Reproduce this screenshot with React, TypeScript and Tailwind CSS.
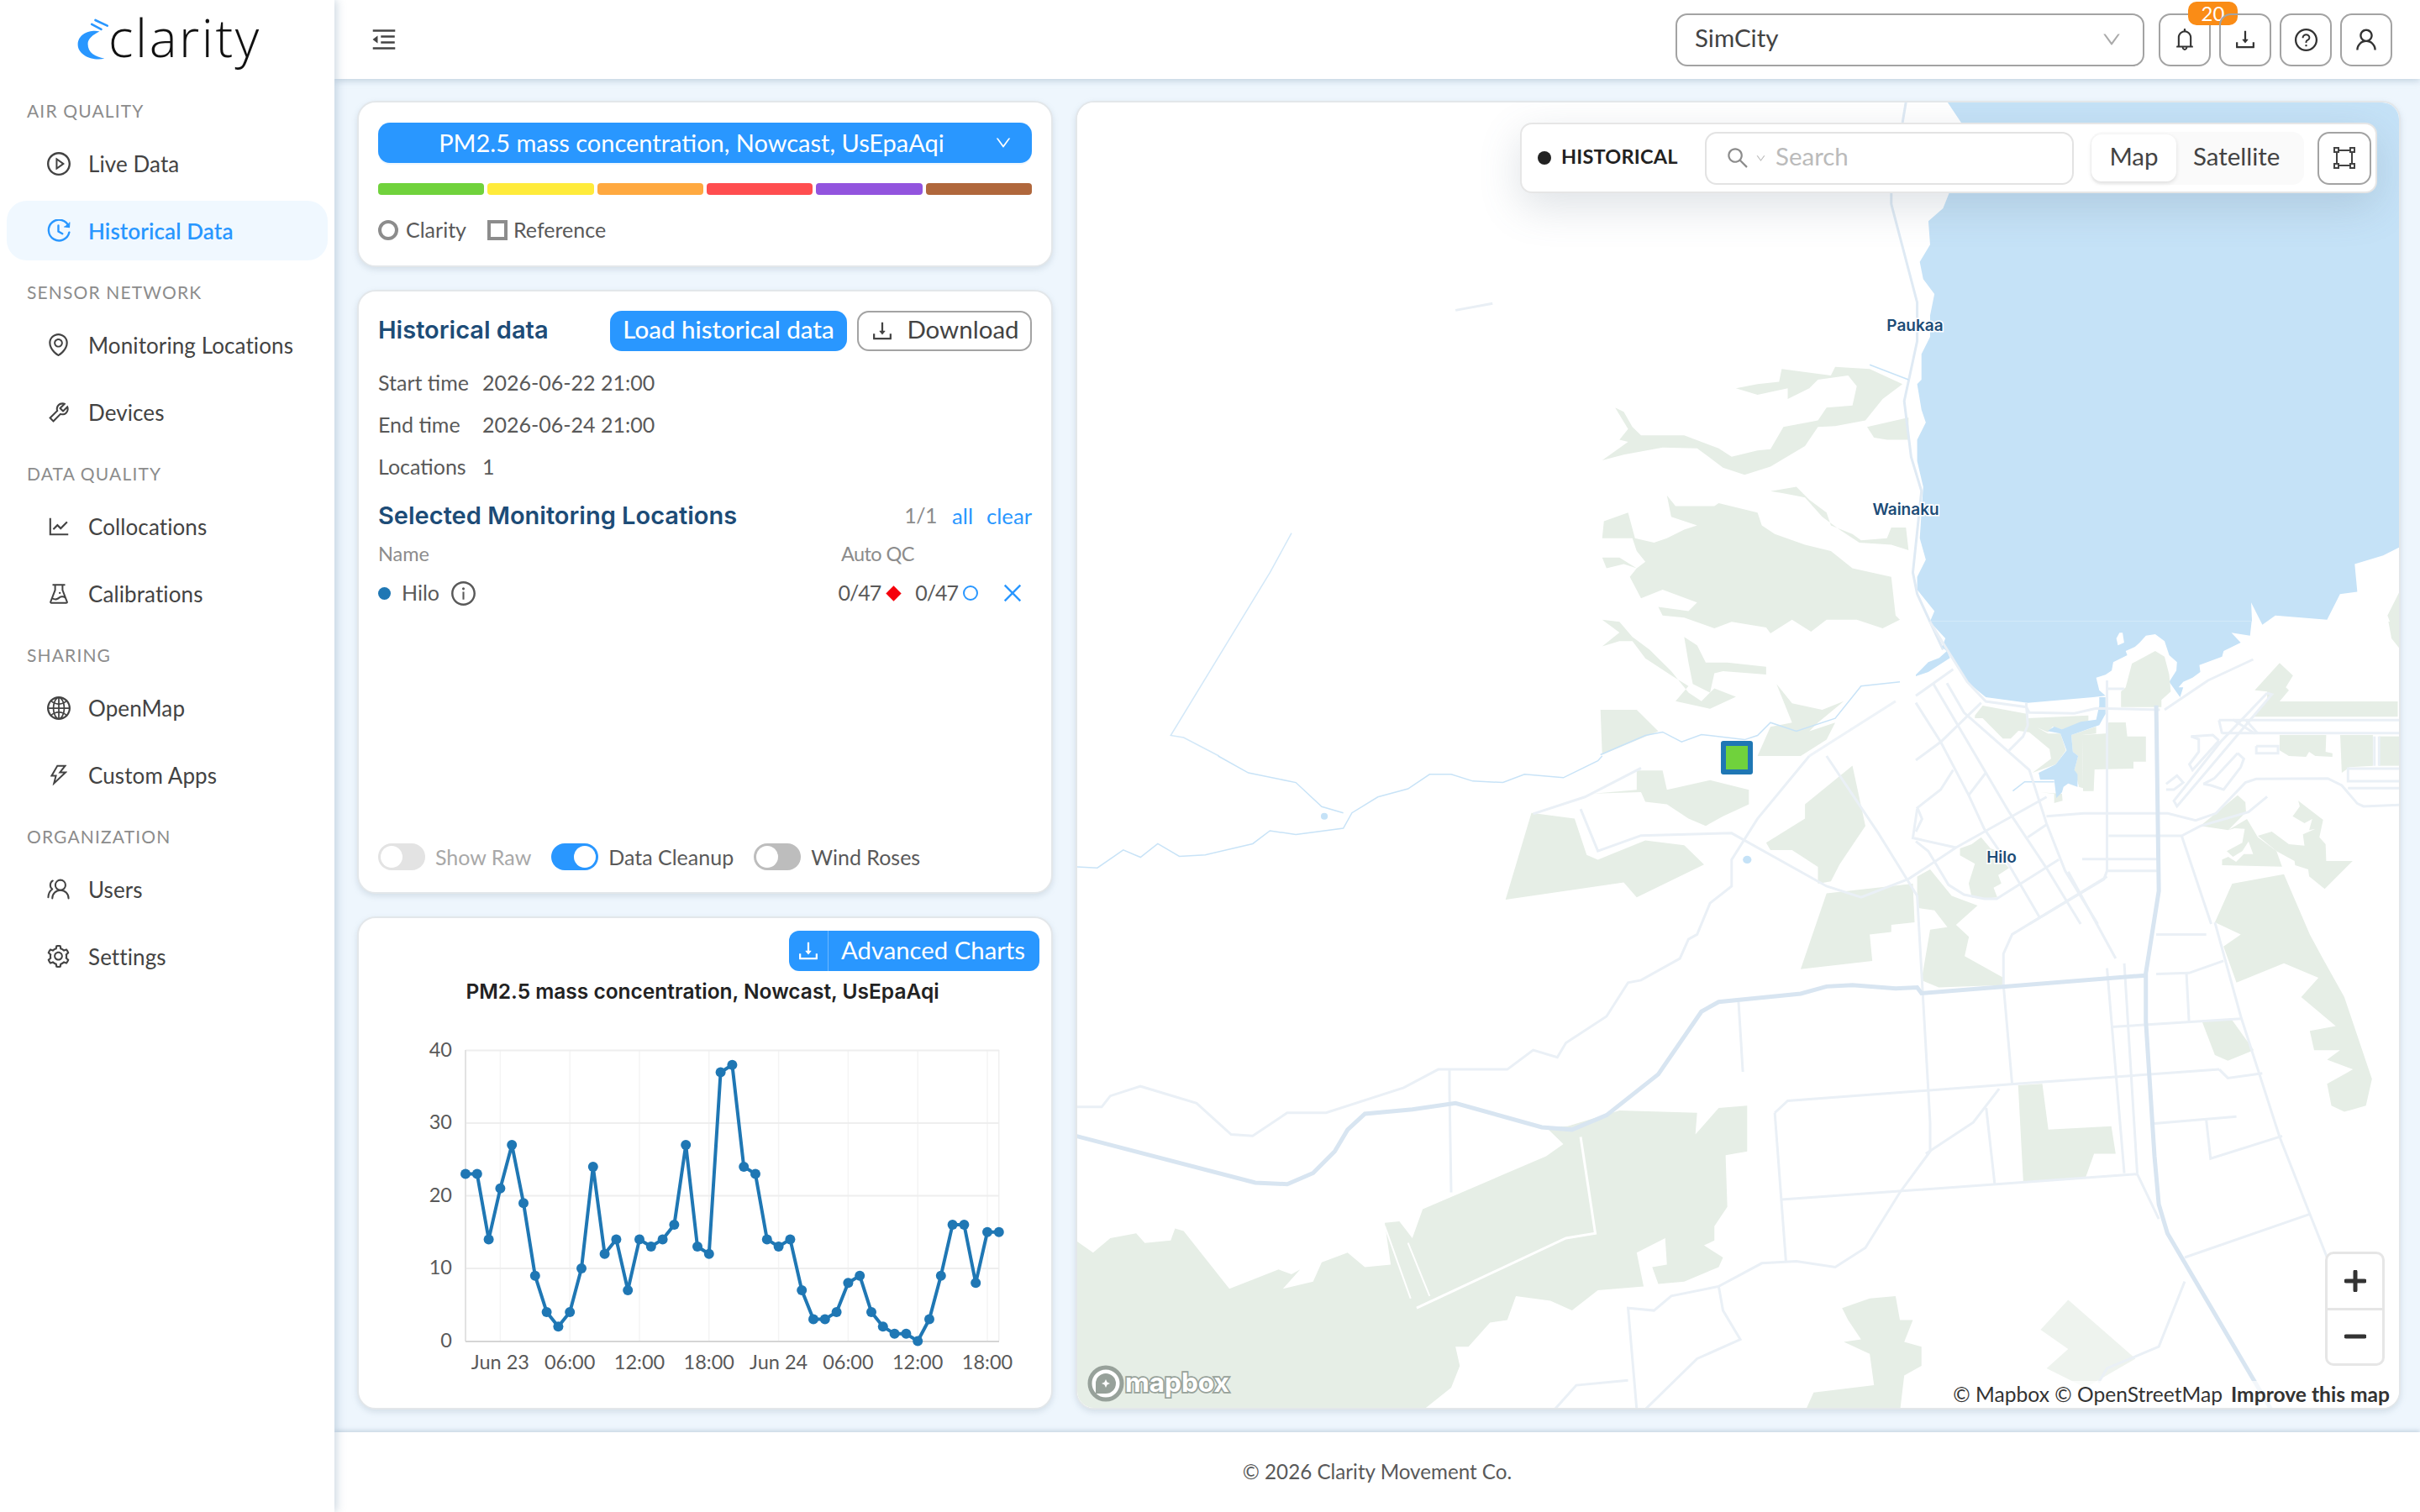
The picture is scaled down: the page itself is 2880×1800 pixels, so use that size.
import {
  AiOutlineBell,
  AiOutlineClose,
  AiOutlineDown,
  AiOutlineDownload,
  AiOutlineEnvironment,
  AiOutlineExperiment,
  AiOutlineGlobal,
  AiOutlineInfoCircle,
  AiOutlineLineChart,
  AiOutlineMenuFold,
  AiOutlinePlayCircle,
  AiOutlineQuestionCircle,
  AiOutlineSearch,
  AiOutlineSetting,
  AiOutlineThunderbolt,
  AiOutlineTool,
  AiOutlineUser,
} from 'react-icons/ai';
import { UsersRound } from 'lucide-react';

function HistoryIcon() {
  return (
    <svg viewBox="0 0 26 26" className="w-[28px] h-[28px]" fill="none" stroke="currentColor" strokeWidth="2.2" strokeLinecap="round">
      <path d="M24 8 A11.5 11.5 0 1 0 24.5 14.5" />
      <path d="M25 3.5 L24.6 9 L19 8.4" fill="currentColor" strokeWidth="1" />
      <path d="M12.5 7 V13.5 L17 16" />
    </svg>
  );
}

function Logo() {
  return (
    <div className="h-[119px] pl-[90px] pt-[20px] flex items-start">
      <svg viewBox="15 15 125 160" className="w-[42px] h-[53px]">
        <path d="M100 68 C70 60 22 75 22 115 C22 150 70 175 118 165 C85 158 58 145 58 112 C58 95 75 80 100 68 Z" fill="#2997ff" />
        <path d="M85 27 L128 47 M72 42 L106 60" stroke="#2997ff" strokeWidth="8" strokeLinecap="round" />
      </svg>
      <span className="-ml-[3px] -mt-[18px] text-[62px] leading-[85px] font-light tracking-[2.6px] text-[#111] font-[family-name:'Open_Sans',sans-serif]">clarity</span>
    </div>
  );
}

const navSections = [
  { title: 'AIR QUALITY', items: [
    { label: 'Live Data', icon: <AiOutlinePlayCircle size={32} /> },
    { label: 'Historical Data', icon: <HistoryIcon />, active: true },
  ] },
  { title: 'SENSOR NETWORK', items: [
    { label: 'Monitoring Locations', icon: <AiOutlineEnvironment size={31} /> },
    { label: 'Devices', icon: <AiOutlineTool size={30} /> },
  ] },
  { title: 'DATA QUALITY', items: [
    { label: 'Collocations', icon: <AiOutlineLineChart size={30} /> },
    { label: 'Calibrations', icon: <AiOutlineExperiment size={30} /> },
  ] },
  { title: 'SHARING', items: [
    { label: 'OpenMap', icon: <AiOutlineGlobal size={32} /> },
    { label: 'Custom Apps', icon: <AiOutlineThunderbolt size={30} /> },
  ] },
  { title: 'ORGANIZATION', items: [
    { label: 'Users', icon: <UsersRound size={29} strokeWidth={1.7} className="-scale-x-100" /> },
    { label: 'Settings', icon: <AiOutlineSetting size={31} /> },
  ] },
];

function Sidebar() {
  return (
    <aside className="w-[398px] shrink-0 bg-white z-20 shadow-[3px_0_10px_rgba(120,150,175,0.35)]">
      <Logo />
      {navSections.map((section) => (
        <div key={section.title} className="mb-[25px]">
          <div className="h-[26px] mb-[14px] pl-[32px] text-[21px] leading-[26px] tracking-[1.15px] text-[#8c8c8c]">{section.title}</div>
          <div className="flex flex-col gap-[9px]">
            {section.items.map((item) => (
              <div
                key={item.label}
                className={`ml-[8px] w-[382px] h-[71px] rounded-[24px] flex items-center ${item.active ? 'bg-[#f0f8ff] text-[#2997ff] font-semibold' : 'text-[#434343]'}`}
              >
                <span className="w-[97px] flex justify-center pl-[31px] pr-[5px] shrink-0">{item.icon}</span>
                <span className="text-[26px] tracking-[0.1px] pt-[1px]">{item.label}</span>
              </div>
            ))}
          </div>
        </div>
      ))}
    </aside>
  );
}

function IconButton({ children, badge }: { children: React.ReactNode; badge?: string }) {
  return (
    <div className="relative w-[62px] h-[63px] rounded-[14px] border-2 border-[#a3a3a3] flex items-center justify-center text-[#333]">
      {children}
      {badge && (
        <span className="absolute -top-[16px] left-[33px] w-[59px] h-[28px] rounded-[10px] bg-[#fa8c16] text-white text-[24px] leading-[27px] text-center">{badge}</span>
      )}
    </div>
  );
}

function Header() {
  return (
    <header className="h-[94px] shrink-0 bg-white flex items-center pl-[42px] pr-[33px] z-10 shadow-[0_2px_8px_rgba(120,150,175,0.4)]">
      <AiOutlineMenuFold size={34} className="text-[#444]" />
      <div className="ml-auto w-[558px] h-[63px] rounded-[14px] border-2 border-[#a3a3a3] flex items-center pl-[21px] pr-[24px] text-[29.5px] text-[#434343]">
        <span className="pb-[3px]">SimCity</span>
        <AiOutlineDown size={26} className="ml-auto text-[#aaa]" />
      </div>
      <div className="ml-[17px] flex gap-[10px]">
        <IconButton badge="20"><AiOutlineBell size={30} /></IconButton>
        <IconButton><AiOutlineDownload size={30} /></IconButton>
        <IconButton><AiOutlineQuestionCircle size={31} /></IconButton>
        <IconButton><AiOutlineUser size={32} /></IconButton>
      </div>
    </header>
  );
}

const card = 'bg-white rounded-[22px] border-2 border-[#e3e7ea] shadow-[0_3px_7px_rgba(120,140,160,0.22)]';
const aqiBars = ['bg-[#70d23c]', 'bg-[#ffeb3b]', 'bg-[#ffa940]', 'bg-[#ff4d4f]', 'bg-[#9254de]', 'bg-[#b0673c]'];
const heading = "text-[29px] font-semibold text-[#1d4c77] font-[family-name:Inter,sans-serif]";

function MetricCard() {
  return (
    <section className={`${card} h-[198px] shrink-0 px-[23px] pt-[24px]`}>
      <div className="h-[48px] rounded-[14px] bg-[#2997ff] text-white text-[29px] flex items-center justify-center relative shadow-[0_2px_0_rgba(41,151,255,0.08)]">
        <span className="-ml-[32px] pb-[1px]">PM2.5 mass concentration, Nowcast, UsEpaAqi</span>
        <AiOutlineDown size={22} className="absolute right-[23px]" />
      </div>
      <div className="mt-[24px] flex gap-[4px]">
        {aqiBars.map((c) => (
          <div key={c} className={`${c} h-[14px] flex-1 rounded-[4px]`} />
        ))}
      </div>
      <div className="mt-[27px] h-[30px] flex items-center text-[25px] text-[#595959]">
        <span className="w-[24px] h-[24px] rounded-full border-[4px] border-[#8c8c8c]" />
        <span className="ml-[9px]">Clarity</span>
        <span className="ml-[25px] w-[24px] h-[24px] border-[4px] border-[#8c8c8c]" />
        <span className="ml-[7px]">Reference</span>
      </div>
    </section>
  );
}

function Toggle({ on, dim, label }: { on?: boolean; dim?: boolean; label: string }) {
  return (
    <div className="flex items-center gap-[12px]">
      <span className={`relative w-[56px] h-[32px] rounded-full ${on ? 'bg-[#2997ff]' : dim ? 'bg-[#e3e3e3]' : 'bg-[#bdbdbd]'}`}>
        <span className={`absolute top-[3px] w-[26px] h-[26px] rounded-full bg-white ${on ? 'right-[3px]' : 'left-[3px]'}`} />
      </span>
      <span className={`text-[25px] ${dim ? 'text-[#a8a8a8]' : 'text-[#595959]'}`}>{label}</span>
    </div>
  );
}

function HistoricalCard() {
  const rows = [
    ['Start time', '2026-06-22 21:00'],
    ['End time', '2026-06-24 21:00'],
    ['Locations', '1'],
  ];
  return (
    <section className={`${card} h-[719px] shrink-0 px-[23px] pt-[23px] pb-[23px] flex flex-col`}>
      <div className="flex items-center h-[48px]">
        <h2 className={`${heading} pb-[3px]`}>Historical data</h2>
        <button className="ml-auto w-[282px] h-[48px] rounded-[14px] bg-[#2997ff] text-white text-[29.5px] font-medium pb-[3px]">Load historical data</button>
        <button className="ml-[12px] w-[208px] h-[48px] rounded-[14px] border-2 border-[#a3a3a3] text-[#434343] text-[29.5px] flex items-center justify-center gap-[14px]">
          <AiOutlineDownload size={30} />
          <span className="pb-[3px]">Download</span>
        </button>
      </div>
      <div className="mt-[13px]">
        {rows.map(([label, value]) => (
          <div key={label} className="h-[50px] flex items-center text-[25px] text-[#595959]">
            <span className="w-[124px]">{label}</span>
            <span>{value}</span>
          </div>
        ))}
      </div>
      <div className="mt-[15px] h-[36px] flex items-center">
        <h3 className={heading}>Selected Monitoring Locations</h3>
        <span className="ml-auto text-[25px] tracking-[-0.5px] text-[#8c8c8c]">1/1</span>
        <span className="ml-[18px] text-[25.7px] text-[#2997ff]">all</span>
        <span className="ml-[16px] text-[25.7px] text-[#2997ff]">clear</span>
      </div>
      <div className="mt-[13px] h-[30px] flex items-center text-[23.5px] text-[#8c8c8c]">
        <span className="w-[551px]">Name</span>
        <span className="tracking-[-0.6px]">Auto QC</span>
      </div>
      <div className="mt-[11px] h-[40px] flex items-center text-[25px] text-[#595959]">
        <span className="w-[15px] h-[15px] rounded-full bg-[#1f77b4]" />
        <span className="ml-[13px]">Hilo</span>
        <AiOutlineInfoCircle size={33} className="ml-[12px]" />
        <span className="ml-auto tracking-[-1px]">0/47</span>
        <span className="ml-[9px] w-[13px] h-[13px] rotate-45 bg-[#f5000b]" />
        <span className="ml-[19px] tracking-[-1px]">0/47</span>
        <span className="ml-[6px] w-[18px] h-[18px] rounded-full border-2 border-[#2997ff]" />
        <AiOutlineClose size={30} className="ml-[26px] mr-[8px] text-[#2997ff]" />
      </div>
      <div className="mt-auto flex gap-[24px]">
        <Toggle dim label="Show Raw" />
        <Toggle on label="Data Cleanup" />
        <Toggle label="Wind Roses" />
      </div>
    </section>
  );
}

const series = [23, 23, 14, 21, 27, 19, 9, 4, 2, 4, 10, 24, 12, 14, 7, 14, 13, 14, 16, 27, 13, 12, 37, 38, 24, 23, 14, 13, 14, 7, 3, 3, 4, 8, 9, 4, 2, 1, 1, 0, 3, 9, 16, 16, 8, 15, 15];
const chartX = (i: number) => 554 + i * 13.8;
const chartY = (v: number) => 1598.5 - v * 8.65;
const xTicks = [[3, 'Jun 23'], [9, '06:00'], [15, '12:00'], [21, '18:00'], [27, 'Jun 24'], [33, '06:00'], [39, '12:00'], [45, '18:00']] as const;

function ChartCard() {
  return (
    <section className={`${card} h-[587px] shrink-0 pt-[15px]`}>
      <div className="flex justify-end pr-[14px]">
        <div className="w-[298px] h-[48px] rounded-[12px] bg-[#2997ff] text-white text-[29.3px] flex items-center">
          <span className="w-[47px] h-full flex items-center justify-center border-r border-[#6db8ff]"><AiOutlineDownload size={30} /></span>
          <span className="ml-[15px] pb-[3px]">Advanced Charts</span>
        </div>
      </div>
      <svg viewBox="427 1160 824 516" className="block w-[824px] h-[516px] mt-[2px]">
        <text x="836" y="1191" textAnchor="middle" fontSize="24.5" fontWeight="600" fill="#222" fontFamily="Inter, sans-serif">PM2.5 mass concentration, Nowcast, UsEpaAqi</text>
        {xTicks.map(([i]) => (
          <line key={i} x1={chartX(i)} x2={chartX(i)} y1="1252" y2="1598" stroke="#f4f4f4" strokeWidth="1.5" />
        ))}
        <line x1={chartX(46)} x2={chartX(46)} y1="1252" y2="1598" stroke="#f0f0f0" strokeWidth="1.5" />
        {[10, 20, 30, 40].map((v) => (
          <line key={v} x1="554" x2="1189" y1={chartY(v)} y2={chartY(v)} stroke="#eeeeee" strokeWidth="2" />
        ))}
        <line x1="554" x2="554" y1="1252" y2="1599" stroke="#e2e2e2" strokeWidth="2" />
        <line x1="554" x2="1189" y1="1599" y2="1599" stroke="#d5d5d5" strokeWidth="2" />
        {[0, 10, 20, 30, 40].map((v) => (
          <text key={v} x="538" y={chartY(v) + 7} textAnchor="end" fontSize="23.5" fill="#595959" fontFamily="Lato, sans-serif">{v}</text>
        ))}
        {xTicks.map(([i, label]) => (
          <text key={i} x={chartX(i)} y="1632" textAnchor="middle" fontSize="23.5" fill="#595959" fontFamily="Lato, sans-serif">{label}</text>
        ))}
        <polyline points={series.map((v, i) => `${chartX(i)},${chartY(v)}`).join(' ')} fill="none" stroke="#1f77b4" strokeWidth="4" strokeLinejoin="round" />
        {series.map((v, i) => (
          <circle key={i} cx={chartX(i)} cy={chartY(v)} r="6" fill="#1f77b4" />
        ))}
      </svg>
    </section>
  );
}

const waterEdge = 'M1020,42 L1036,90 L1022,255 L1015,290 L998,320 L1000,375 L988,415 L992,455 L1005,490 L1000,540 L1000,590 L990,630 L990,690 L985,700 L990,760 L995,790 L985,830 L985,880 L992,940 L988,1060 L995,1110 L985,1150 L985,1180 L1005,1230 L1000,1254 L1373,1254 L1372,1210 L1385,1262 L1400,1240 L1460,1250 L1475,1190 L1495,1185 L1492,1120 L1525,1100 L1545,1080 L1545,30 L1020,30 Z';

const forestTop = [
  '775,710 800,700 825,695 828,665 885,680 890,660 930,665 968,700 945,735 925,785 890,798 870,800 855,845 815,893 785,912 760,895 730,850 690,848 645,865 620,878 650,835 640,830 650,805 635,755 645,765 655,800 665,820 715,820 755,850 770,870 800,855 815,852 830,800 870,785 880,755 910,750 915,705 905,680 870,690 860,710 835,735 835,710 800,725',
  '927,800 975,778 975,830 950,830 935,825',
  '695,960 705,985 750,985 755,978 800,1000 805,1030 820,1050 855,1075 885,1090 910,1130 955,1150 960,1240 965,1250 945,1270 915,1250 880,1250 862,1278 840,1250 815,1282 810,1268 770,1255 750,1270 715,1245 690,1240 685,1220 720,1230 730,1210 690,1180 665,1200 652,1150 660,1130 645,1120 625,1130 620,1105 640,1105 660,1130 670,1115 660,1090 655,1060 620,1060 622,1020 650,1000 658,1060 680,1070 695,1060 715,1040 730,1030 700,1010',
  '815,950 845,940 860,970 880,1000 885,1030 910,1050 920,1065 950,1060 955,1035 972,1035 975,1088 955,1075 918,1070 895,1040 875,1010 855,965 830,955',
  '620,1250 640,1255 655,1290 675,1320 700,1370 720,1420 735,1440 750,1410 775,1430 745,1458 705,1440 720,1405 700,1380 670,1340 655,1300 640,1300 620,1312 640,1280',
  '715,1290 730,1310 740,1350 765,1350 810,1360 810,1378 760,1370 750,1375 745,1420 725,1400 720,1350',
  '822,1400 840,1445 875,1460 900,1440 870,1490 860,1510 890,1490 880,1530 850,1568 800,1568 815,1500 840,1490',
  '618,1460 660,1460 685,1510 620,1565',
  '1530,1240 1545,1180 1545,1320',
];

const forestBottom = [
  '538,118 588,130 602,205 615,215 670,175 715,185 738,225 660,293 645,262 508,298',
  '610,78 660,70 660,30 690,30 695,70 745,50 790,70 790,100 760,125 740,145 720,130 695,100 670,95 665,75',
  '810,180 855,130 855,100 910,20 925,145 895,225 885,260 870,265 870,230 840,195 815,195',
  '880,285 980,265 982,345 955,350 955,365 930,370 933,425 850,442',
  '985,250 1000,235 1025,290 1055,310 1030,350 1045,375 1040,415 1085,460 1085,475 1010,480 990,465 1000,360 1020,355 1005,320 985,315',
  '1330,345 1350,265 1410,245 1440,370 1455,420 1480,500 1512,670 1505,725 1480,738 1465,725 1460,680 1490,650 1460,630 1475,610 1445,610 1440,570 1470,560 1430,500 1450,460 1410,430 1355,470 1340,395 1360,370',
  '1315,550 1350,548 1375,610 1345,632 1330,620',
  '1102,683 1130,680 1137,775 1210,768 1215,825 1190,825 1180,875 1108,885',
  '10,1005 30,1030 50,1000 80,990 90,1010 120,1005 125,980 135,985 188,1105 245,1065 260,1075 270,1065 250,1105 285,1090 295,1050 325,1030 345,1060 375,1055 368,968 385,965 400,1000 412,940 555,830 575,805 555,770 580,768 640,735 730,740 728,785 755,730 788,725 788,820 763,828 765,935 750,975 750,1005 738,1015 760,1040 755,1060 715,1090 685,1095 678,1060 695,1055 693,1000 660,1030 668,1100 615,1108 585,1150 560,1130 520,1120 510,1170 490,1175 465,1225 450,1225 455,1265 445,1310 410,1360 10,1360',
  '898,1145 930,1125 960,1120 965,1170 980,1170 970,1215 990,1225 990,1265 970,1285 965,1360 855,1360 865,1320 935,1305 930,1240 900,1215 920,1210 905,1170',
];

const thinRoads = [
  '10,728 40,728 50,705 85,685 150,720 190,785 215,788 255,740 300,740 390,688 430,650 510,650 540,610 568,625 578,595 625,540 650,470 665,465 710,420 720,380 730,370 745,305 770,270 770,215 800,130 860,0',
  '540,120 600,85 665,25',
  '595,110 615,197 665,165 770,160 880,270 920,293 975,255 1030,190 1135,85',
  '880,0 940,160 985,290 1000,760 1000,820 965,905 925,1020 890,1060 845,1048 805,1052 755,1100 700,1120 680,1150 650,1145 660,1355',
  '820,740 835,715 1100,680 1335,650',
  '820,740 833,1050',
  '828,920 1240,867 1265,960',
  '1085,475 1095,680',
  '1205,440 1225,865',
  '1225,430 1240,865',
  '1085,475 1085,410 1095,370 1205,250',
  '1160,240 1215,420',
  '1330,345 1360,540 1405,790 1440,950 1460,1040',
  '1262,370 1320,370',
  '1262,452 1300,450 1340,425',
  '1210,562 1360,545',
  '1297,450 1300,550',
  '1260,762 1355,748',
  '1320,755 1325,835 1408,788',
  '1335,650 1345,668 1385,658',
  '1080,690 1050,760 995,825',
  '1065,730 1075,890',
  '778,510 783,655',
  '443,650 443,690 445,905',
  '1295,1040 1440,950',
  '1295,1090 1265,1225 1205,1270 1195,1300',
  '755,1100 760,1150 780,1210 730,1250 670,1355',
  '565,1355 590,1305 650,1295',
  '985,110 980,170 1030,190',
];

// airport / harbour corner, traced at finer scale
const harbourForest = [
  '695,150 770,105 800,125 815,190 820,250 790,280 790,305 660,305 660,250 675,235',
  '190,335 215,300 360,330 360,345 555,335 555,355 470,385 440,375 425,395 390,378 425,400 465,400 483,460 450,510 375,540 435,490 430,455 365,395 330,390 305,418 280,418 215,345 190,345',
  '535,405 610,400 620,360 675,360 680,410 740,410 740,500 700,500 700,525 575,528 572,605 538,605',
  '500,405 580,375 580,400 535,405 538,595 490,580 525,590 510,530 522,480 505,465',
  '400,610 470,615 472,640 445,648 445,615',
  '1090,245 1170,148 1213,193 1190,235 1200,245 1170,285 1550,285 1550,340 1085,340 1130,280 1130,250',
  '1170,405 1320,405 1318,465 1340,470 1340,483 1285,480 1265,465 1255,483 1200,480 1170,460',
  '1365,405 1470,405 1470,515 1395,520 1370,540',
  '1490,410 1555,410 1555,515 1490,515',
  '1520,0 1555,0 1555,95 1530,60',
  '915,730 1035,620 1060,645 1062,680 1005,745',
  '1005,745 1065,705 1100,770 1160,820 1178,875 985,870 985,850 1005,840 1030,858 1055,830 1085,830 1070,785 1050,820 1020,840 1000,820 1050,790 1058,740 1025,738',
  '1100,765 1145,750 1200,795 1250,800 1245,760 1285,740 1265,745 1275,705 1250,720 1212,695 1235,660 1230,640 1310,708 1298,770 1318,795 1320,855 1405,855 1315,955 1265,910 1262,885 1220,870 1218,855 1160,820',
  '142,810 180,795 210,770 240,810 265,820 275,850 300,880 265,905 275,935 250,950 262,985 215,990 180,985 170,935 190,865 142,835',
];

const harbourRoads = [
  '45,0 95,90 165,215 225,285 355,305 365,325 510,328 580,310 785,315',
  '355,290 360,370 345,410 300,460',
  '0,495 80,430 210,290',
  '0,265 120,170',
  '100,220 155,325 365,530 420,720 480,890 585,1080',
  '0,290 80,430 170,620 220,740 300,870 400,1060',
  '55,220 300,680 420,880 530,1080',
  '225,540 170,620',
  '120,530 80,600 5,665 20,705 0,750',
  '360,770 420,725',
  '420,695 540,685 810,685 900,710 965,685 1060,575 1095,562 1325,560 1370,585 1420,650 1440,660 1555,655',
  '615,210 615,890 605,920 365,1080',
  '615,240 670,240',
  '620,765 855,765 915,730 1070,680 1130,625',
  '855,765 950,1080',
  '535,848 775,848',
  '615,890 775,890',
  '0,785 40,820 105,940 155,975 220,990 260,990 460,850',
  '800,315 940,210 1085,135',
  '975,352 1555,352',
  '985,398 1555,398',
  '975,352 985,400',
  '1130,255 980,430 830,640 840,660 1145,260 1130,255',
  '1035,470 1055,490 1045,520 990,600 950,585 925,580',
  '1035,470 960,560 925,580',
  '885,410 955,405 975,425',
  '885,410 910,420 910,465 880,510 890,530 975,425',
  '1095,445 1165,445 1165,470 1095,470 1095,445',
  '1555,525 1390,525 1390,570 1555,570',
  '1390,595 1555,595',
  '1475,410 1475,515',
  '1490,410 1490,515',
  '1020,350 1090,400',
  '1060,350 1100,400',
  '805,580 840,550 860,575 830,600 805,600',
];

function MapCanvas() {
  const z6 = 'translate(1270 100) scale(1.027 0.5102)';
  const z7 = 'translate(1270 900) scale(1.027 0.574)';
  const z8 = 'translate(2280 740) scale(0.37 0.3333)';
  return (
    <svg viewBox="1282 122 1573 1554" className="block w-full h-full">
      <rect x="1282" y="122" width="1573" height="1554" fill="#ffffff" />
      <g transform={z6}>
        <path d={waterEdge} fill="#c5e2f7" />
        {forestTop.map((p) => <polygon key={p} points={p} fill="#e6eee6" />)}
        <polyline points="972,42 968,90" fill="none" stroke="#dfeaf4" strokeWidth="3" vectorEffect="non-scaling-stroke" />
        <polyline points="955,255 955,280 985,510 985,600 970,740 978,870 990,950 980,1140 985,1190 1015,1320" fill="none" stroke="#dfeaf4" strokeWidth="3" vectorEffect="non-scaling-stroke" />
        <polyline points="450,528 493,512" fill="none" stroke="#e9eff5" strokeWidth="3" vectorEffect="non-scaling-stroke" />
        <polyline points="260,1048 235,1140 120,1520 135,1525 176,1568" fill="none" stroke="#d3e8f8" strokeWidth="1.5" vectorEffect="non-scaling-stroke" />
        <polyline points="618,1565 670,1520 690,1512 712,1535 735,1518 785,1530 800,1520 815,1490 845,1510 890,1480 920,1405 965,1395" fill="none" stroke="#c8e3f7" strokeWidth="1.5" vectorEffect="non-scaling-stroke" />
        <polyline points="930,655 975,690" fill="none" stroke="#c8e3f7" strokeWidth="1.5" vectorEffect="non-scaling-stroke" />
        <polyline points="960,1440 860,1568" fill="none" stroke="#eef3f8" strokeWidth="3" vectorEffect="non-scaling-stroke" />
      </g>
      <g transform={z8}>
        <path d="M45,0 L95,60 L85,90 L120,130 L165,215 L225,270 L360,290 L570,270 L610,265 L590,245 L580,200 L610,190 L630,175 L635,145 L680,120 L675,105 L705,90 L720,75 L740,50 L770,45 L800,70 L815,120 L840,145 L838,175 L815,215 L850,270 L860,235 L845,235 L860,215 L890,200 L915,180 L912,155 L985,125 L990,105 L1045,75 L1015,40 L1075,50 L1080,0 Z" fill="#c5e2f7" />
        <polygon points="645,60 655,40 665,40 670,75 650,85" fill="#fff" />
        <polygon points="0,190 40,145 75,130 100,105 110,130 40,180 0,195" fill="#c5e2f7" />
        {harbourForest.map((p) => <polygon key={p} points={p} fill="#e6eee6" />)}
        <polygon points="388,375 430,392 465,400 485,460 450,510 395,540 400,565 445,565 452,630 470,610 475,590 490,578 520,590 520,545 510,530 522,480 505,465 500,405 590,370 610,330 610,270 590,270 590,300 580,350 530,358 470,385 445,375 425,390" fill="#c5e2f7" />
        <polyline points="312,605 350,572 445,572" fill="none" stroke="#c8e3f7" strokeWidth="1.5" vectorEffect="non-scaling-stroke" />
        {harbourRoads.map((p) => <polyline key={p} points={p} fill="none" stroke="#eaf0f6" strokeWidth="3" vectorEffect="non-scaling-stroke" />)}
      </g>
      <g transform={z7}>
        {forestBottom.map((p) => <polygon key={p} points={p} fill="#e6eee6" />)}
        <polygon points="1160,1128 1238,1250 1180,1310 1135,1270 1160,1230 1128,1190" fill="#eef3ee" />
        <polyline points="595,790 612,990 578,1000 405,1145" fill="none" stroke="#fff" strokeWidth="3" vectorEffect="non-scaling-stroke" />
        <polyline points="368,975 398,1125" fill="none" stroke="#fff" strokeWidth="2" vectorEffect="non-scaling-stroke" />
        <polyline points="395,1010 420,1120" fill="none" stroke="#fff" strokeWidth="2" vectorEffect="non-scaling-stroke" />
        {thinRoads.map((p) => <polyline key={p} points={p} fill="none" stroke="#eaf0f6" strokeWidth="3" vectorEffect="non-scaling-stroke" />)}
        <polyline points="1262,-105 1265,280 1250,450 1250,550 1260,830 1265,930 1275,990 1395,1355" fill="none" stroke="#d8e5f1" strokeWidth="5" vectorEffect="non-scaling-stroke" />
        <polyline points="10,788 218,885 255,888 285,865 310,820 325,775 345,742 400,733 450,720 550,770 585,775 625,745 685,660 735,530 755,510 850,493 880,478 910,475 960,482 985,480 990,492 1250,455" fill="none" stroke="#d8e5f1" strokeWidth="5" vectorEffect="non-scaling-stroke" />
        <polyline points="10,230 35,232 65,195 85,210 105,182 130,208 160,205 215,182 235,155 265,163 320,150 330,118 360,85 395,68 420,38 445,38 470,52 505,55 530,38 575,45 615,10 620,0" fill="none" stroke="#c8e3f7" strokeWidth="1.5" vectorEffect="non-scaling-stroke" />
        <polyline points="175,0 210,35 265,55 295,105 320,118" fill="none" stroke="#c8e3f7" strokeWidth="1.5" vectorEffect="non-scaling-stroke" />
        <ellipse cx="788" cy="215" rx="5" ry="8" fill="#c5e2f7" />
        <ellipse cx="298" cy="125" rx="4" ry="7" fill="#c5e2f7" />
      </g>
      <g fontFamily="Inter, sans-serif" fontSize="19" fontWeight="600" fill="#1d4c77" stroke="#fff" strokeWidth="3" paintOrder="stroke" textAnchor="middle">
        <text x="2279" y="394">Paukaa</text>
        <text x="2268" y="613">Wainaku</text>
        <text x="2382" y="1027">Hilo</text>
      </g>
      <g transform="translate(1294 1625)">
        <circle cx="22" cy="22" r="19" fill="#fff" stroke="#97a19a" strokeWidth="5" />
        <path d="M22 10 A12 12 0 0 1 22 34 H10 V22 A12 12 0 0 1 22 10 Z" fill="#97a19a" />
        <path d="M22 17 L23.6 20.4 L27 22 L23.6 23.6 L22 27 L20.4 23.6 L17 22 L20.4 20.4 Z" fill="#fff" />
        <text x="45" y="32" fontFamily="Inter, sans-serif" fontSize="31.5" fontWeight="700" fill="#fff" stroke="#97a19a" strokeWidth="3.5" paintOrder="stroke">mapbox</text>
      </g>
    </svg>
  );
}

function MapCard() {
  return (
    <section className={`${card} relative flex-1 ml-[27px] overflow-hidden`}>
      <MapCanvas />
      <div className="absolute left-[766px] top-[760px] w-[38px] h-[40px] rounded-[3px] border-[6px] border-[#1f77b4] bg-[#70d23c]" />
      <div className="absolute top-[24px] right-[26px] w-[1020px] h-[84px] bg-white rounded-[14px] border-2 border-[#e6e6e6] shadow-[0_16px_50px_rgba(90,110,130,0.2)] flex items-center pl-[19px]">
        <span className="w-[16px] h-[16px] rounded-full bg-[#222]" />
        <span className="ml-[12px] w-[143px] text-[23.5px] font-bold tracking-[0.2px] text-[#222] pb-[3px]">HISTORICAL</span>
        <div className="ml-[28px] w-[439px] h-[63px] rounded-[14px] border-2 border-[#e3e3e3] flex items-center pl-[22px] text-[#bbb]">
          <AiOutlineSearch size={30} className="text-[#8c8c8c]" />
          <AiOutlineDown size={13} className="ml-[6px]" />
          <span className="ml-[11px] text-[29.5px] pb-[3px]">Search</span>
        </div>
        <div className="ml-[20px] w-[254px] h-[63px] rounded-[14px] bg-[#fafafa] flex items-center text-[29.5px] text-[#434343] pl-[1px]">
          <span className="w-[101px] h-[56px] pb-[3px] rounded-[12px] bg-white shadow-[0_2px_5px_rgba(0,0,0,0.12)] flex items-center justify-center">Map</span>
          <span className="ml-[20px] pb-[3px]">Satellite</span>
        </div>
        <div className="ml-[16px] w-[64px] h-[63px] rounded-[14px] border-2 border-[#a3a3a3] flex items-center justify-center">
          <svg viewBox="0 0 30 30" className="w-[30px] h-[30px]" fill="none" stroke="#434343" strokeWidth="2">
            <path d="M6 6 H24 M6 24 H24 M6 6 V24 M24 6 V24" />
            <rect x="3" y="3" width="5" height="5" fill="#fff" />
            <rect x="22" y="3" width="5" height="5" fill="#fff" />
            <rect x="3" y="22" width="5" height="5" fill="#fff" />
            <rect x="22" y="22" width="5" height="5" fill="#fff" />
          </svg>
        </div>
      </div>
      <div className="absolute right-[17px] bottom-[50px] w-[71px] h-[136px] bg-white rounded-[10px] border-[3px] border-[#e6e6e6] flex flex-col">
        <div className="flex-1 flex items-center justify-center border-b-[3px] border-[#e6e6e6]">
          <svg viewBox="0 0 26 26" className="w-[26px] h-[26px]"><path d="M13 2 V24 M2 13 H24" stroke="#333" strokeWidth="5" strokeLinecap="round" /></svg>
        </div>
        <div className="flex-1 flex items-center justify-center">
          <svg viewBox="0 0 26 26" className="w-[26px] h-[26px]"><path d="M2 13 H24" stroke="#333" strokeWidth="5" strokeLinecap="round" /></svg>
        </div>
      </div>
      <div className="absolute right-[11px] bottom-[0px] h-[32px] pl-[6px] flex items-center gap-[10px] text-[24.6px] text-[#333] bg-white/70">
        <span>© Mapbox © OpenStreetMap</span>
        <span className="font-bold">Improve this map</span>
      </div>
    </section>
  );
}

export default function App() {
  return (
    <div className="w-screen h-screen flex overflow-hidden bg-[#eef6fd] font-[family-name:Lato,sans-serif]">
      <Sidebar />
      <div className="flex-1 min-w-0 flex flex-col">
        <Header />
        <main className="flex-1 min-h-0 pl-[27px] pr-[23px] pt-[26px] pb-[27px] flex">
          <div className="w-[828px] shrink-0 flex flex-col gap-[27px]">
            <MetricCard />
            <HistoricalCard />
            <ChartCard />
          </div>
          <MapCard />
        </main>
        <footer className="h-[95px] shrink-0 bg-white flex items-center justify-center text-[24.2px] text-[#595959] shadow-[0_-2px_5px_rgba(120,150,175,0.35)] z-10">
          © 2026 Clarity Movement Co.
        </footer>
      </div>
    </div>
  );
}
